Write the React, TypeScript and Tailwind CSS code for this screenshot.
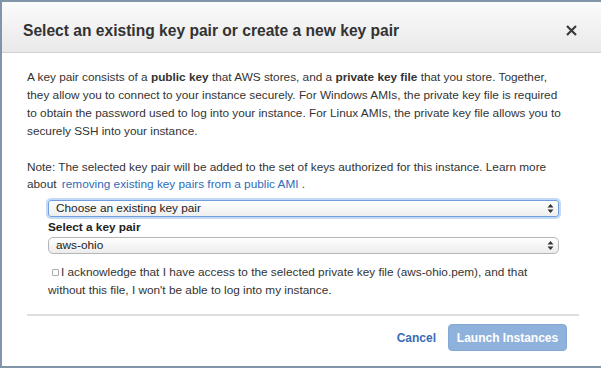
import React from "react";

function SelectArrows() {
  return (
    <svg width="7" height="11" viewBox="0 0 7 11" className="shrink-0">
      <path d="M3.5 1 L6.5 4.5 L0.5 4.5 Z" fill="#333" />
      <path d="M3.5 10 L6.5 6.5 L0.5 6.5 Z" fill="#333" />
    </svg>
  );
}

function FakeSelect({ value, focused }: { value: string; focused?: boolean }) {
  return (
    <div
      className={
        focused
          ? "h-[17px] flex items-center justify-between pl-[7px] pr-[4px] rounded-[3px] border border-[#6f9fdc] shadow-[0_0_0_2px_rgba(125,170,230,0.45)] bg-gradient-to-b from-white to-[#efefef]"
          : "h-[17px] flex items-center justify-between pl-[7px] pr-[4px] rounded-[5px] border border-[#b5b5b5] bg-gradient-to-b from-white to-[#ececec]"
      }
    >
      <span className="text-[11.8px] leading-none text-[#222]">{value}</span>
      <SelectArrows />
    </div>
  );
}

export default function App() {
  return (
    <div className="w-[601px] h-[368px] overflow-hidden bg-white border-l-2 border-t-2 border-b-2 border-[#8095a9] flex flex-col font-['Liberation_Sans',Arial,sans-serif] text-[#333]">
      <div className="h-[51px] shrink-0 flex items-start justify-between pl-[21px] pr-[24px] pt-[19px] bg-gradient-to-b from-[#fbfbfb] to-[#e9e9e9] border-b border-[#d2d2d2]">
        <h1 className="text-[15.6px] leading-[20px] font-bold text-[#333]">
          Select an existing key pair or create a new key pair
        </h1>
        <svg width="11" height="11" viewBox="0 0 11 11" className="mt-[4px]">
          <path d="M1 1 L10 10 M10 1 L1 10" stroke="#3a3a3a" strokeWidth="2.2" />
        </svg>
      </div>

      <div className="flex-1 flex flex-col pl-[25px] pr-[22px] pt-[15px] text-[11.8px] leading-[18px] text-[#333] whitespace-nowrap">
        <p>
          A key pair consists of a <b>public key</b> that AWS stores, and a <b>private key file</b> that you store. Together,
          <br />
          they allow you to connect to your instance securely. For Windows AMIs, the private key file is required
          <br />
          to obtain the password used to log into your instance. For Linux AMIs, the private key file allows you to
          <br />
          securely SSH into your instance.
        </p>

        <p className="mt-[19px] leading-[17px]">
          Note: The selected key pair will be added to the set of keys authorized for this instance. Learn more
          <br />
          about <a className="text-[#2f6bb8] ml-[2px]">removing existing key pairs from a public AMI</a> .
        </p>

        <div className="ml-[21px] mr-[20px] mt-[7px] flex flex-col">
          <FakeSelect value="Choose an existing key pair" focused />
          <div className="font-bold text-[#222] leading-[18px] mt-[1px] mb-[1px]">Select a key pair</div>
          <FakeSelect value="aws-ohio" />
          <p className="mt-[9px] leading-[18px]">
            <span className="inline-block w-[7px] h-[7px] border border-[#a9a9a9] rounded-[1px] ml-[4px] mr-[2px] align-[0px]" />
            I acknowledge that I have access to the selected private key file (aws-ohio.pem), and that
            <br />
            without this file, I won't be able to log into my instance.
          </p>
        </div>

        <div className="mt-[15px] border-t-2 border-[#dedede]" />

        <div className="flex items-center justify-end gap-[12px] pt-[8px] pr-[12px]">
          <span className="font-bold text-[#3a6cb5] text-[12px]">Cancel</span>
          <button className="w-[119px] h-[27px] rounded-[4px] bg-[#8fb2dd] border border-[#84a8d6] text-white font-bold text-[12px]">
            Launch Instances
          </button>
        </div>
      </div>
    </div>
  );
}
